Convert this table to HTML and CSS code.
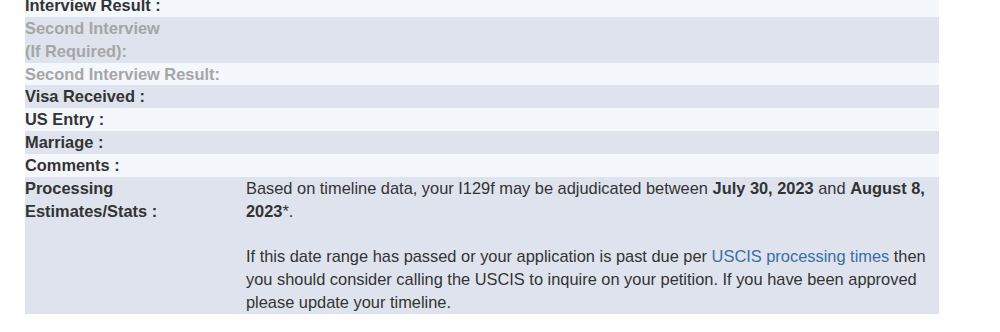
FILE: index.html
```html
<!DOCTYPE html>
<html>
<head>
<meta charset="utf-8">
<link rel="stylesheet" href="styles.css">
</head>
<body>
<div class="timeline">
  <div class="row light"><div class="label">Interview Result :</div><div class="value"></div></div>
  <div class="row dark"><div class="label muted">Second Interview<br>(If Required):</div><div class="value"></div></div>
  <div class="row light"><div class="label muted">Second Interview Result:</div><div class="value"></div></div>
  <div class="row dark"><div class="label">Visa Received :</div><div class="value"></div></div>
  <div class="row light"><div class="label">US Entry :</div><div class="value"></div></div>
  <div class="row dark"><div class="label">Marriage :</div><div class="value"></div></div>
  <div class="row light"><div class="label">Comments :</div><div class="value"></div></div>
  <div class="row dark"><div class="label">Processing Estimates/Stats :</div><div class="value">Based on timeline data, your I129f may be adjudicated between <b>July 30, 2023</b> and <b>August 8, 2023</b>*.<br><br>If this date range has passed or your application is past due per <a href="#">USCIS processing times</a> then you should consider calling the USCIS to inquire on your petition. If you have been approved please update your timeline.</div></div>
</div>
</body>
</html>
```

FILE: styles.css
```css
html, body {
  margin: 0;
  padding: 0;
  background: #ffffff;
}
body {
  font-family: "Liberation Sans", Arial, sans-serif;
  font-size: 16.4px;
  line-height: 22.86px;
  color: #333333;
}
.timeline {
  width: 914px;
  margin: -6px 0 0 25px;
}
.row {
  display: grid;
  grid-template-columns: 221px 1fr;
}
.light { background: #f4f7fc; }
.dark { background: #dee3ed; }
.label {
  font-weight: bold;
  color: #333333;
  padding-right: 14px;
}
.label.muted { color: #a6a6a6; }
.value { padding-right: 12px; }
.value b { font-weight: bold; }
.value a { color: #3a6ea5; text-decoration: none; }
```
